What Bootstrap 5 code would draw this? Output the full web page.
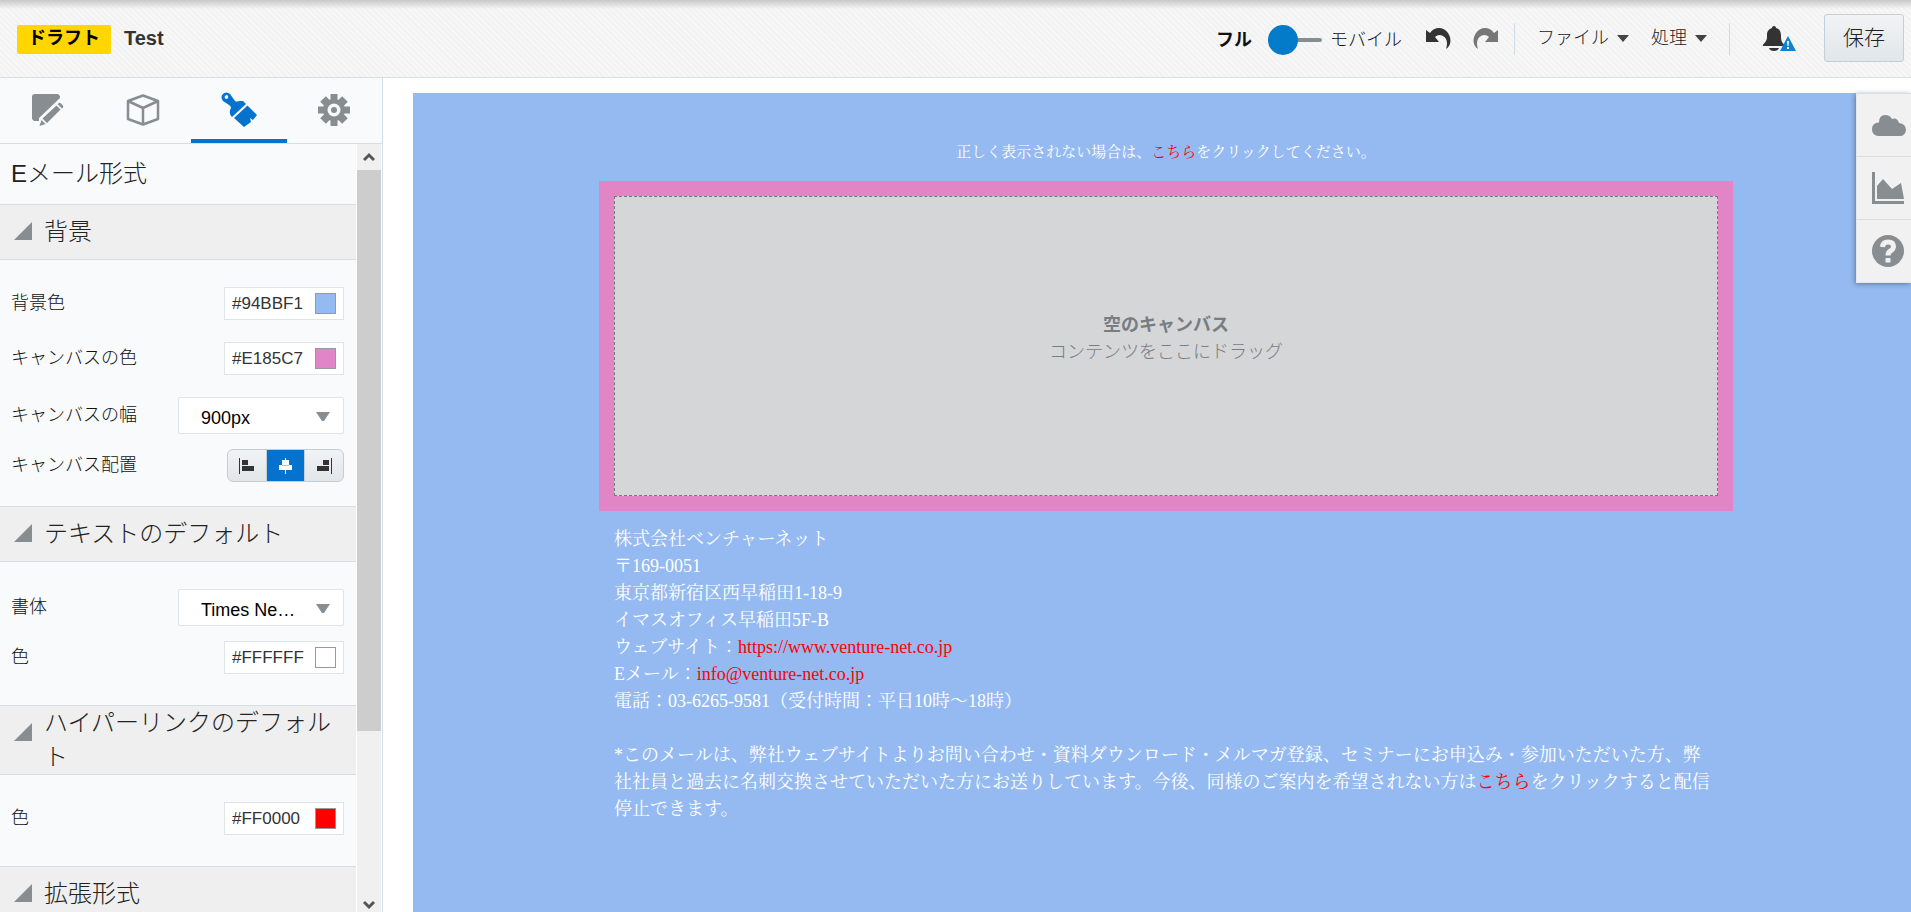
<!DOCTYPE html>
<html lang="ja">
<head>
<meta charset="utf-8">
<meta name="viewport" content="width=device-width, initial-scale=1">
<title>Test</title>
<link href="https://cdn.jsdelivr.net/npm/bootstrap@5.3.0/dist/css/bootstrap.min.css" rel="stylesheet">
<style>
:root { --line: #d6dfe6; --ink: #333; --icon: #878d91; --accent: #0572ce; }
body { font-family: "Liberation Sans", "Noto Sans CJK JP", sans-serif; font-size: 18px; line-height: 27px; font-weight: 300; color: var(--ink); background: #fff; }
svg { display: block; flex: none; }

.topbar { height: 78px; border-bottom: 1px solid var(--line);
  background: linear-gradient(#c8c8c8, rgba(245,245,245,0) 9px), repeating-linear-gradient(45deg, #f7f7f7 0 2px, #f2f2f2 2px 4px); }
.brand { padding: 2px 0 0 17px; gap: 13px; }
.draft { background: #ffd600; color: #000; border-radius: 2px; padding: 0 11px; height: 29px; line-height: 26px; }
.doc-name { font-size: 20px; line-height: 26px; }
.tools { padding-right: 7px; }
.tool { background: none; border: 0; padding: 0; margin: 0 0 0 24px; color: #222; font-weight: 300; }
.tool.near { margin-left: 22px; }
.tool.last { margin-right: 22px; }
.tool.bell { margin-right: 20px; padding: 0 8px; }
.rule { width: 1px; height: 32px; background: #cfdce6; }
.mode-switch { color: #111; padding-top: 4px; gap: 8px; }
.mode { appearance: none; width: 54px; height: 30px; margin: 0 0 2px 8px; background: transparent; }
.mode::-webkit-slider-runnable-track { height: 4px; background: var(--icon); border-radius: 2px; }
.mode::-webkit-slider-thumb { appearance: none; width: 30px; height: 30px; margin-top: -13px; border-radius: 50%; background: #047bc8; }
.btn-save { width: 80px; height: 48px; padding: 0; margin-bottom: 2px; font-size: 21px; font-weight: 300; color: #222; border: 1px solid #c4ced7; border-radius: 3px; background: linear-gradient(#f1f3f5, #e2e6e9); }

.side { width: 383px; background: #f8fafc; border-right: 1px solid var(--line); }
.tabs { height: 66px; border-bottom: 1px solid var(--line); }
.tab-btn { flex: 1 1 0; border: 0; border-bottom: 4px solid transparent; background: none; color: var(--icon); padding: 2px 0 0; }
.tab-btn.active { color: var(--accent); border-color: var(--accent); }
.panel-title { height: 60px; padding: 0 11px; font-size: 24px; line-height: 59px; margin: 0; font-weight: 300; color: #222; }
.sec-head { min-height: 56px; border: 1px solid var(--line); border-width: 1px 0; background: #efefef; padding: 0 8px 0 14px; gap: 12px; color: #222; }
.sec-head svg { margin-top: 17px; }
.sec-head h2 { font-size: 24px; line-height: 34px; font-weight: 300; margin: 0; align-self: center; }
.sec-body { padding: 27px 12px 31px 11px; color: #111; }
.sec-body.tight { padding-bottom: 24px; }
.gap-row { margin-bottom: 22px; }
.gap-near { margin-bottom: 15px; }
.hexbox { width: 120px; height: 33px; background: #fff; border: 1px solid #dfe4e7; padding: 0 7px; }
.hexbox input[type=text] { flex: 1 1 0; width: 0; min-width: 0; border: 0; padding: 0; background: none; font-size: 17px; color: var(--ink); }
.hexbox input[type=color] { flex: none; width: 21px; height: 21px; padding: 0; border: 1px solid #999; background: none; appearance: none; }
.hexbox input::-webkit-color-swatch-wrapper { padding: 0; }
.hexbox input::-webkit-color-swatch { border: 0; border-radius: 0; }
.picker { appearance: none; width: 166px; height: 37px; border: 1px solid #dfe4e7; border-radius: 2px; padding: 6px 40px 0 22px; font-size: 18px; color: #000;
  background: #fff url("data:image/svg+xml,%3Csvg xmlns='http://www.w3.org/2000/svg' width='14' height='10'%3E%3Cpath d='M0 0H14L8 9H6Z' fill='%23878d91'/%3E%3C/svg%3E") no-repeat right 13px top 14px; }
.aligns { width: 117px; height: 33px; border: 1px solid #c4ced7; border-radius: 6px; background: linear-gradient(#f1f3f5, #e2e6e9); overflow: hidden; }
.aligns button { flex: 1 1 0; border: 0; border-right: 1px solid #c4ced7; background: none; color: var(--ink); padding: 0; }
.aligns button:last-child { border-right: 0; }
.aligns .on { background: var(--accent); color: #fff; }
.track { width: 26px; background: #f0f0f0; border: 1px solid #fff; border-width: 0 1px; color: #555; }
.track .cap { height: 26px; }
.track .cap.low { height: 12px; }
.thumb { background: #cdcdcd; flex: 0 0 73%; }

.stage { padding: 15px 0 0 30px; }
.mail { background: #94baf1; color: #fff; font-weight: 400; font-family: "Liberation Serif", "Noto Serif CJK JP", "Noto Sans CJK JP", serif; padding: 46px 0 0 8px; }
.mail a { color: #f00; text-decoration: none; }
.mail-col { width: 100%; max-width: 1134px; }
.notice { font-size: 15px; margin-bottom: 15px; }
.canvas { background: #e185c7; padding: 15px; }
.drop { height: 300px; background: #d5d6d8; border: 1px dashed #777; color: #777d81; padding-bottom: 15px; font-weight: 300; font-family: "Liberation Sans", "Noto Sans CJK JP", sans-serif; }
.footer-text { padding: 15px; }
.dock { top: 15px; right: 0; width: 55px; background: #f1f1f1; color: var(--icon); box-shadow: -1px 1px 5px rgba(0,0,0,.35); border-left: 1px solid #e3e7ea; border-bottom: 1px solid #e3e7ea; }
.dock button { height: 63px; border: 0; border-top: 1px solid var(--line); background: none; color: inherit; padding: 0 0 0 15px; }
</style>
<script src="https://cdn.jsdelivr.net/npm/bootstrap@5.3.0/dist/js/bootstrap.bundle.min.js"></script>
</head>
<body class="vh-100 d-flex flex-column overflow-hidden">
<header class="topbar flex-shrink-0 d-flex align-items-center justify-content-between">
  <div class="brand d-flex">
    <span class="draft fw-bold">ドラフト</span>
    <h1 class="doc-name fw-bold mb-0">Test</h1>
  </div>
  <div class="tools d-flex align-items-center">
    <label class="mode-switch d-flex align-items-center"><span class="fw-bold">フル</span><input class="mode" type="range" min="0" max="1" value="0" aria-label="表示"><span>モバイル</span></label>
    <button class="tool" aria-label="元に戻す"><svg width="25" height="22" viewBox="0 0 25 22"><path fill="#333" d="M0 2 4 5C8-1 17-2 22 5C26 11 25 18 20 21C22 15 21 10 17 8C14 6 11 7 9 9L13 14H0Z"/></svg></button>
    <button class="tool near me-3" aria-label="やり直す"><svg width="25" height="22" viewBox="0 0 25 22"><path fill="#777" d="M25 2 21 5C17-1 8-2 3 5C-1 11 0 18 5 21C3 15 4 10 8 8C11 6 14 7 16 9L12 14H25Z"/></svg></button>
    <span class="rule"></span>
    <button class="tool near d-flex align-items-center gap-2">ファイル<svg width="12" height="7" viewBox="0 0 12 7"><path d="M0 0H12L6 7Z" fill="#444"/></svg></button>
    <button class="tool near last d-flex align-items-center gap-2">処理<svg width="12" height="7" viewBox="0 0 12 7"><path d="M0 0H12L6 7Z" fill="#444"/></svg></button>
    <span class="rule"></span>
    <button class="tool bell" aria-label="通知"><svg width="34" height="26" viewBox="0 0 34 26"><path fill="#333" d="M12 0C13.500 0 14 1 14 2C18 3 19 6 19 10C19 15 20 17 23 19V20H1C0 19 3 17 4 15C5 13 5 12 5 9C5 5 7 3 10 2C10 1 10.500 0 12 0ZM7 22H17C16 26 8 26 7 22Z"/><path fill="#0a84d0" d="M26 10 34 25H18Z"/><path fill="#fff" d="M25 15H27L26.500 20H25.500ZM25 21H27V23H25Z"/></svg></button>
    <button class="btn btn-save">保存</button>
  </div>
</header>
<div class="flex-grow-1 d-flex overflow-hidden">
  <aside class="side flex-shrink-0 d-flex flex-column">
    <nav class="tabs flex-shrink-0 d-flex">
      <button class="tab-btn d-flex align-items-center justify-content-center" aria-label="編集"><svg width="32" height="32" viewBox="0 0 32 32" fill="currentColor"><path d="M3 0H26L28 2V4L7 24V27H2L0 25V3Q0 0 3 0Z"/><path d="M24.500 11.500 28.500 15.500 15 29 10.500 24.500ZM26.500 9.500Q27.500 8 29 9.500L31 11.500Q32 13 30.500 14L30 14.500 25.500 10ZM9.500 26 13.500 30 7.500 32Z"/></svg></button>
      <button class="tab-btn d-flex align-items-center justify-content-center" aria-label="コンポーネント"><svg width="34" height="32" viewBox="0 0 34 32" fill="none" stroke="currentColor" stroke-width="2.500" stroke-linejoin="round"><path d="M17 1.500 32 7V25L17 30.500 2 25V7ZM2 7 17 14 32 7M17 14V30"/></svg></button>
      <button class="tab-btn active d-flex align-items-center justify-content-center" aria-label="スタイル"><svg width="36" height="36" viewBox="0 0 36 36" fill="currentColor"><path fill-rule="evenodd" d="M2 2Q5-1 9 2L14 9Q16 10 18 9L22 9 25 12 11 25Q7 21 10 16Q10 14 8 13L2 9Q-1 5 2 2ZM4 4Q3 6 5 7Q8 7 7 4Q6 2 4 4Z"/><path d="M26.500 13.500 36 23 32 28 29 26 30 30 23 35 13 26Z"/></svg></button>
      <button class="tab-btn d-flex align-items-center justify-content-center" aria-label="設定"><svg width="32" height="32" viewBox="-16 -16 32 32" fill="currentColor"><path d="M-3.500-16H3.500V16H-3.500ZM-16-3.500H16V3.500H-16Z"/><path d="M-4-15.500H4V15.500H-4ZM-15.500-4H15.500V4H-15.500Z" transform="rotate(45)"/><circle r="11"/><circle r="6.500" fill="#f8fafc"/><circle r="3"/></svg></button>
    </nav>
    <div class="flex-grow-1 d-flex overflow-hidden">
      <div class="flex-grow-1 overflow-hidden">
        <p class="panel-title">Eメール形式</p>
        <div class="sec-head d-flex align-items-start"><svg width="18" height="18"><path d="M18 0V18H0Z" fill="#878d91"/></svg><h2>背景</h2></div>
        <div class="sec-body tight">
          <div class="gap-row d-flex align-items-center justify-content-between"><label for="bg">背景色</label><div class="hexbox d-flex align-items-center"><input type="text" id="bg" value="#94BBF1"><input type="color" value="#94bbf1" aria-label="背景色"></div></div>
          <div class="gap-row d-flex align-items-center justify-content-between"><label for="cv">キャンバスの色</label><div class="hexbox d-flex align-items-center"><input type="text" id="cv" value="#E185C7"><input type="color" value="#e185c7" aria-label="キャンバスの色"></div></div>
          <div class="gap-near d-flex align-items-center justify-content-between"><label for="cw">キャンバスの幅</label><select id="cw" class="picker"><option>900px</option></select></div>
          <div class="d-flex align-items-center justify-content-between"><span>キャンバス配置</span>
            <div class="aligns d-flex" role="group" aria-label="キャンバス配置">
              <button class="d-flex align-items-center justify-content-center" aria-label="左"><svg width="15" height="16" fill="currentColor"><path d="M0 0H1V16H0ZM3 2H9V7H3ZM3 8H15V13H3Z"/></svg></button>
              <button class="on d-flex align-items-center justify-content-center" aria-label="中央"><svg width="13" height="16" fill="currentColor"><path d="M6 0H7V2H10V7H13V12H7V16H6V12H0V7H3V2H6Z"/><path d="M3 7H10V8H3Z" fill="#0572ce" opacity=".4"/></svg></button>
              <button class="d-flex align-items-center justify-content-center" aria-label="右"><svg width="15" height="16" fill="currentColor"><path d="M14 0H15V16H14ZM6 2H12V7H6ZM0 8H12V13H0Z"/></svg></button>
            </div></div>
        </div>
        <div class="sec-head d-flex align-items-start"><svg width="18" height="18"><path d="M18 0V18H0Z" fill="#878d91"/></svg><h2>テキストのデフォルト</h2></div>
        <div class="sec-body">
          <div class="gap-near d-flex align-items-center justify-content-between"><label for="ff">書体</label><select id="ff" class="picker"><option>Times Ne…</option></select></div>
          <div class="d-flex align-items-center justify-content-between"><label for="tc">色</label><div class="hexbox d-flex align-items-center"><input type="text" id="tc" value="#FFFFFF"><input type="color" value="#ffffff" aria-label="文字色"></div></div>
        </div>
        <div class="sec-head d-flex align-items-start"><svg width="18" height="18"><path d="M18 0V18H0Z" fill="#878d91"/></svg><h2>ハイパーリンクのデフォルト</h2></div>
        <div class="sec-body">
          <div class="d-flex align-items-center justify-content-between"><label for="lc">色</label><div class="hexbox d-flex align-items-center"><input type="text" id="lc" value="#FF0000"><input type="color" value="#ff0000" aria-label="リンク色"></div></div>
        </div>
        <div class="sec-head d-flex align-items-start"><svg width="18" height="18"><path d="M18 0V18H0Z" fill="#878d91"/></svg><h2>拡張形式</h2></div>
      </div>
      <div class="track flex-shrink-0 d-flex flex-column">
        <div class="cap flex-shrink-0 d-flex align-items-center justify-content-center"><svg width="12" height="10" fill="none" stroke="currentColor" stroke-width="3"><path d="M1 8 6 3 11 8"/></svg></div>
        <div class="thumb"></div>
        <div class="cap low flex-shrink-0 mt-auto d-flex justify-content-center"><svg width="12" height="10" fill="none" stroke="currentColor" stroke-width="3"><path d="M1 2 6 7 11 2"/></svg></div>
      </div>
    </div>
  </aside>
  <main class="stage flex-grow-1 d-flex position-relative overflow-hidden">
    <div class="mail flex-grow-1 d-flex justify-content-center">
      <div class="mail-col">
        <p class="notice text-center">正しく表示されない場合は、<a href="#">こちら</a>をクリックしてください。</p>
        <div class="canvas"><div class="drop d-flex flex-column align-items-center justify-content-center"><strong class="fw-bold">空のキャンバス</strong><span>コンテンツをここにドラッグ</span></div></div>
        <div class="footer-text">
          <p class="mb-0">株式会社ベンチャーネット<br>〒169-0051<br>東京都新宿区西早稲田1-18-9<br>イマスオフィス早稲田5F-B<br>ウェブサイト：<a href="#">https://www.venture-net.co.jp</a><br>Eメール：<a href="#">info@venture-net.co.jp</a><br>電話：03-6265-9581（受付時間：平日10時～18時）</p>
          <br>
          <p class="mb-0">*このメールは、弊社ウェブサイトよりお問い合わせ・資料ダウンロード・メルマガ登録、セミナーにお申込み・参加いただいた方、弊社社員と過去に名刺交換させていただいた方にお送りしています。今後、同様のご案内を希望されない方は<a href="#">こちら</a>をクリックすると配信停止できます。</p>
        </div>
      </div>
    </div>
    <div class="dock position-absolute d-flex flex-column">
      <button aria-label="クラウド"><svg width="34" height="21" viewBox="0 0 34 21"><path fill="currentColor" d="M6 21Q0 20 0 14Q0 8 7 7.500Q7 0 13 0Q18 0 20 4Q25 2 27 8Q34 9 34 15Q33 21 28 21Z"/></svg></button>
      <button aria-label="レポート"><svg width="32" height="32" viewBox="0 0 32 32" fill="currentColor"><path d="M0 0H3V29H32V32H0ZM5 14 11 7 20 17 29 11 32 27H5Z"/></svg></button>
      <button aria-label="ヘルプ"><svg width="32" height="32" viewBox="0 0 32 32"><circle cx="16" cy="16" r="16" fill="currentColor"/><path fill="none" stroke="#f1f1f1" stroke-width="5" d="M10.500 12Q11 7 16 7Q21.500 7 21.500 11.500Q21.500 14 18.500 16Q16 17.500 16 20.500"/><path fill="#f1f1f1" d="M13.500 23H18.500V27.500H13.500Z"/></svg></button>
    </div>
  </main>
</div>
</body>
</html>
